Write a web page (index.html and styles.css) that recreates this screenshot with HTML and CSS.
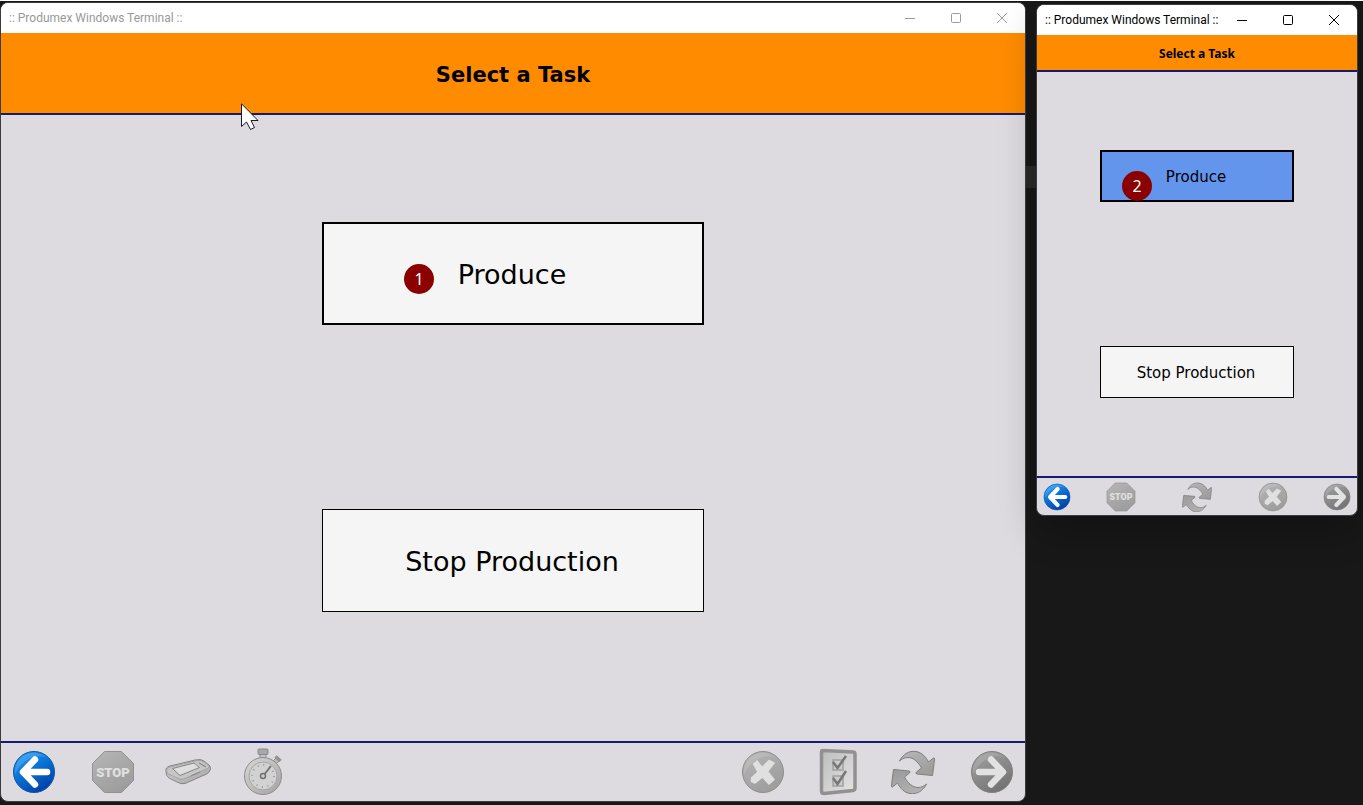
FILE: index.html
```html
<!DOCTYPE html>
<html lang="en">
<head>
  <meta charset="UTF-8">
  <meta name="viewport" content="width=device-width, initial-scale=1.0">
  <title>Produmex Windows Terminal</title>
  <link rel="stylesheet" href="styles.css">
</head>
<body>
  <!-- Shared icons -->
  <svg class="icon-defs" aria-hidden="true">
    <defs>
      <linearGradient id="blue" x1="0" y1="0" x2="0.6" y2="1">
        <stop offset="0" stop-color="#2aa2f5"/>
        <stop offset="0.5" stop-color="#0a74d8"/>
        <stop offset="1" stop-color="#0242a8"/>
      </linearGradient>
      <linearGradient id="gray" x1="0" y1="0" x2="0.6" y2="1">
        <stop offset="0" stop-color="#b6b6b6"/>
        <stop offset="1" stop-color="#9d9d9d"/>
      </linearGradient>
      <linearGradient id="dark" x1="0" y1="0" x2="0.6" y2="1">
        <stop offset="0" stop-color="#a4a4a4"/>
        <stop offset="1" stop-color="#747474"/>
      </linearGradient>
      <linearGradient id="metal" x1="0" y1="0" x2="1" y2="1">
        <stop offset="0" stop-color="#d8d8d8"/>
        <stop offset="1" stop-color="#a2a2a2"/>
      </linearGradient>
      <linearGradient id="paper" x1="0" y1="0" x2="1" y2="1">
        <stop offset="0" stop-color="#bdbdbd"/>
        <stop offset="1" stop-color="#e4e4e4"/>
      </linearGradient>
      <symbol id="back" viewBox="0 0 44 44">
        <circle cx="22" cy="22" r="20.5" fill="url(#blue)" stroke="#0759ae"/>
        <path d="M3 24A19 19 0 0 1 35 8C26 3 11 8 3 24Z" fill="#fff" opacity=".15"/>
        <path d="M35 22H12M23 9.500L11 22L23 34.500" fill="none" stroke="#fff" stroke-width="6.500" stroke-linecap="round" stroke-linejoin="round"/>
      </symbol>
      <symbol id="next" viewBox="0 0 44 44">
        <circle cx="22" cy="22" r="20.500" fill="url(#dark)" stroke="#808080"/>
        <path d="M3 24A19 19 0 0 1 35 8C26 3 11 8 3 24Z" fill="#fff" opacity=".13"/>
        <path d="M9 22H32M21 9.500L33 22L21 34.500" fill="none" stroke="#e2e2e2" stroke-width="6.500" stroke-linecap="round" stroke-linejoin="round"/>
      </symbol>
      <symbol id="stop" viewBox="0 0 44 44">
        <path d="M13.500 1.500H30.500L42.500 13.500V30.500L30.500 42.500H13.500L1.500 30.500V13.500Z" fill="url(#gray)" stroke="#929292"/>
        <text x="22" y="27" text-anchor="middle" class="stop-text">STOP</text>
      </symbol>
      <symbol id="cancel" viewBox="0 0 44 44">
        <circle cx="22" cy="22" r="20.500" fill="url(#gray)" stroke="#8e8e8e"/>
        <path d="M3 24A19 19 0 0 1 35 8C26 3 11 8 3 24Z" fill="#fff" opacity=".13"/>
        <path d="M16 11L21 17.500L28 10.500L33 13L26.500 21.500L33 29.500L28 34L21.500 27L14 33L10.500 31.500V28L17 22L12.500 14Z" fill="#e0e0e0" stroke="#e0e0e0" stroke-width="1.500" stroke-linejoin="round"/>
      </symbol>
      <symbol id="refresh" viewBox="0 0 44 44">
        <g fill="url(#gray)" stroke="#7e7e7e" stroke-linejoin="round">
          <path id="swirl" d="M8.500 11C12 4 18 .5 25 1.500C31 2.500 35 7 37.500 12L42.500 8Q44 7.500 43.500 10L41.500 25.500L26 24Q24 23.500 25.500 22L30.500 18C27 11.500 22 7.500 17 7.500C13.500 7.500 10.500 9 8.500 11Z"/>
          <use href="#swirl" transform="rotate(180 22 22.500)"/>
        </g>
      </symbol>
      <symbol id="scanner" viewBox="2 0 44 44" overflow="visible">
        <path d="M2 22Q1 17 6 16L31 10Q37 8.500 40 11L46 16Q47.500 19 45 22Q44 24 38 26L21 33.500Q17 34.500 13 32L5 28Q2 26 2 22Z" fill="url(#metal)" stroke="#858585"/>
        <path d="M2.500 21Q2 18 6 17L31 11Q37 9.500 40 12L45 16Q46 18 40 20L20 29Q16 30 13 28L4 24Z" fill="#c6c6c6" stroke="#999" stroke-width=".8"/>
        <path d="M8.500 18.500L30 13L35.500 17.500L16 25.500Z" fill="#dedede" stroke="#858585"/>
        <path d="M35 13L42 17M27 26L36 22" stroke="#888" stroke-width="1.200"/>
      </symbol>
      <symbol id="stopwatch" viewBox="0 0 44 48">
        <rect x="19" y="5" width="6" height="7" fill="#c4c4c4" stroke="#8c8c8c"/>
        <rect x="17" y="1" width="10" height="5.500" rx="1" fill="#a8a8a8" stroke="#888"/>
        <path d="M31 14L35 10L38 13L34 17Z" fill="#bbb" stroke="#8c8c8c"/>
        <path d="M34.500 8.500L39.500 13" stroke="#939393" stroke-width="3.500"/>
        <circle cx="22" cy="28" r="18.500" fill="url(#metal)" stroke="#8d8d8d"/>
        <circle cx="22" cy="28" r="14" fill="#d2d2d2" stroke="#a5a5a5"/>
        <circle cx="22" cy="28" r="11" fill="none" stroke="#888" stroke-width="1.500" stroke-dasharray="1 4.760"/>
        <path d="M22 28L30 18" stroke="#707070" stroke-width="1.800"/>
        <circle cx="22" cy="28" r="2.500" fill="#ccc" stroke="#727272" stroke-width="1.500"/>
      </symbol>
      <symbol id="checklist" viewBox="0 0 44 48">
        <path d="M7 2.500L37 4Q39 4 39 6V40Q39 42 37 42.500L8 45.500Q5.500 45.500 5.500 43V4Q5.500 2.500 7 2.500Z" fill="url(#paper)" stroke="#919191" stroke-width="3.500"/>
        <path d="M17 12H27V22H17ZM17 28H27V38H17Z" fill="#ccc" stroke="#a0a0a0" stroke-width="1.500"/>
        <path d="M17 14L21.500 20L30 8M17 30L21.500 36L30 23" fill="none" stroke="#777" stroke-width="2.500"/>
      </symbol>
    </defs>
  </svg>

  <main class="desktop">
    <section class="window window-large">
      <div class="title-bar inactive">
        <span class="window-title">:: Produmex Windows Terminal ::</span>
        <button class="window-control" aria-label="Minimize"><svg viewBox="0 0 12 12"><path d="M1 6.500H11"/></svg></button>
        <button class="window-control" aria-label="Maximize"><svg viewBox="0 0 12 12"><rect x="1.500" y="1.500" width="9" height="9" rx="1"/></svg></button>
        <button class="window-control" aria-label="Close"><svg viewBox="0 0 12 12"><path d="M1 1L11 11M11 1L1 11"/></svg></button>
      </div>
      <h1 class="screen-title">Select a Task</h1>
      <div class="tasks">
        <button class="task selected">Produce<span class="badge">1</span></button>
        <button class="task">Stop Production</button>
      </div>
      <div class="toolbar">
        <button class="tool" aria-label="Back"><svg><use href="#back"/></svg></button>
        <div class="tool-group">
          <button class="tool" aria-label="Stop" disabled><svg><use href="#stop"/></svg></button>
          <button class="tool tall" aria-label="Scanner" disabled><svg><use href="#scanner"/></svg></button>
          <button class="tool tall" aria-label="Time" disabled><svg><use href="#stopwatch"/></svg></button>
        </div>
        <div class="tool-group push-right">
          <button class="tool" aria-label="Cancel" disabled><svg><use href="#cancel"/></svg></button>
          <button class="tool tall" aria-label="Checklist" disabled><svg><use href="#checklist"/></svg></button>
          <button class="tool" aria-label="Refresh" disabled><svg><use href="#refresh"/></svg></button>
        </div>
        <button class="tool" aria-label="Next" disabled><svg><use href="#next"/></svg></button>
      </div>
    </section>

    <section class="window window-small">
      <div class="title-bar">
        <span class="window-title">:: Produmex Windows Terminal ::</span>
        <button class="window-control" aria-label="Minimize"><svg viewBox="0 0 12 12"><path d="M1 6.500H11"/></svg></button>
        <button class="window-control" aria-label="Maximize"><svg viewBox="0 0 12 12"><rect x="1.500" y="1.500" width="9" height="9" rx="1"/></svg></button>
        <button class="window-control" aria-label="Close"><svg viewBox="0 0 12 12"><path d="M1 1L11 11M11 1L1 11"/></svg></button>
      </div>
      <h1 class="screen-title">Select a Task</h1>
      <div class="tasks">
        <button class="task selected active">Produce<span class="badge">2</span></button>
        <button class="task">Stop Production</button>
      </div>
      <div class="toolbar">
        <button class="tool" aria-label="Back"><svg><use href="#back"/></svg></button>
        <div class="tool-group">
          <button class="tool" aria-label="Stop" disabled><svg><use href="#stop"/></svg></button>
          <button class="tool" aria-label="Refresh" disabled><svg><use href="#refresh"/></svg></button>
          <button class="tool" aria-label="Cancel" disabled><svg><use href="#cancel"/></svg></button>
        </div>
        <button class="tool" aria-label="Next" disabled><svg><use href="#next"/></svg></button>
      </div>
    </section>

    <svg class="cursor" viewBox="0 0 18 28" aria-hidden="true">
      <path d="M.5 .8V23.500L5.500 19L9.500 26.500L13.500 24.500L10 17.500H17Z" fill="#fff" stroke="#1b1b2b"/>
    </svg>
  </main>
</body>
</html>
```
FILE: styles.css
```css
* {
  box-sizing: border-box;
}
body {
  margin: 0;
  background-color: #181818;
  color: #000;
  font-family: "Noto Sans", "Open Sans", sans-serif;
}
button {
  padding: 0;
  border: none;
  background: none;
  color: inherit;
  font-family: inherit;
}
.icon-defs {
  position: absolute;
  width: 0;
  height: 0;
}

/* Desktop */
.desktop {
  position: relative;
  display: flex;
  align-items: flex-start;
  gap: 10px;
  min-height: 100vh;
  padding: 1px 5px 3px 0;
  border-top: 1px solid #fff;
}
.desktop::before {
  content: "";
  position: absolute;
  top: 165px;
  right: 0;
  left: 0;
  height: 22px;
  background: linear-gradient(to left, transparent 320px, #2a2a2a 320px);
}
.cursor {
  position: absolute;
  top: 102px;
  left: 241px;
  width: 18px;
  height: 28px;
}

/* Windows */
.window {
  position: relative;
  display: flex;
  flex-direction: column;
  overflow: hidden;
  border: 1px solid #3c3c3c;
  border-radius: 8px;
  background-color: #dddbe0;
}
.window-large {
  flex: 1;
  align-self: stretch;
}
.window-small {
  width: 322px;
  margin-top: 2px;
  box-shadow: 0 16px 36px rgba(0, 0, 0, 0.24);
}
.title-bar {
  display: flex;
  align-items: center;
  height: 30px;
  padding-left: 8px;
  background-color: #fff;
}
.title-bar.inactive {
  color: #999;
}
.window-title {
  flex: 1;
  font-family: "Segoe UI", Roboto, sans-serif;
  font-size: 12px;
  line-height: 16px;
  white-space: nowrap;
}
.window-control {
  display: flex;
  align-items: center;
  justify-content: center;
  flex: none;
  width: 46px;
  height: 30px;
}
.window-control svg {
  width: 12px;
  height: 12px;
  fill: none;
  stroke: currentColor;
}

/* Screen heading */
.screen-title {
  margin: 0;
  padding-top: 4px;
  border-bottom: 2px solid #191970;
  background-color: #ff8c00;
  font-family: Verdana, "DejaVu Sans", sans-serif;
  font-size: 21px;
  font-weight: bold;
  line-height: 76px;
  text-align: center;
}
.window-small .screen-title {
  padding-top: 2px;
  font-family: "Noto Sans", "Open Sans", sans-serif;
  font-size: 12px;
  line-height: 33px;
}

/* Task buttons */
.tasks {
  display: flex;
  flex: 1;
  flex-direction: column;
  align-items: center;
  gap: 184px;
  padding: 107px 0 129px;
}
.task {
  position: relative;
  width: 382px;
  height: 103px;
  padding: 2px 2px 0 0;
  border: 1px solid #000;
  background-color: #f5f5f5;
  font-family: Verdana, "DejaVu Sans", sans-serif;
  font-size: 27px;
}
.task.selected {
  border-width: 2px;
}
.task.active {
  background-color: #6495ed;
}
.window-small .tasks {
  gap: 144px;
  padding: 78px 0;
}
.window-small .task {
  width: 194px;
  height: 52px;
  font-size: 15px;
}
.badge {
  position: absolute;
  top: 40px;
  left: 80px;
  width: 30px;
  height: 30px;
  border-radius: 50%;
  background-color: #8b0000;
  color: #fff;
  font-family: "Noto Sans", "Open Sans", sans-serif;
  font-size: 16px;
  line-height: 30px;
}
.window-small .badge {
  top: 19px;
  left: 20px;
}

/* Toolbar */
.toolbar {
  display: flex;
  align-items: center;
  gap: 35px;
  height: 60px;
  padding: 0 11px;
  border-top: 2px solid #191970;
}
.tool-group {
  display: flex;
  align-items: center;
  gap: 31px;
}
.push-right {
  margin-left: auto;
}
.tool {
  display: block;
  width: 44px;
  height: 44px;
}
.tool.tall {
  height: 48px;
}
.tool svg {
  display: block;
  width: 100%;
  height: 100%;
  overflow: visible;
}
.stop-text {
  fill: #e0e0e0;
  font-family: Impact, Roboto, sans-serif;
  font-size: 13px;
  font-weight: 900;
}
.window-small .toolbar {
  justify-content: space-between;
  height: 39px;
  padding: 0 6px;
}
.window-small .tool-group {
  gap: 46px;
}
.window-small .tool {
  width: 30px;
  height: 30px;
}
```
